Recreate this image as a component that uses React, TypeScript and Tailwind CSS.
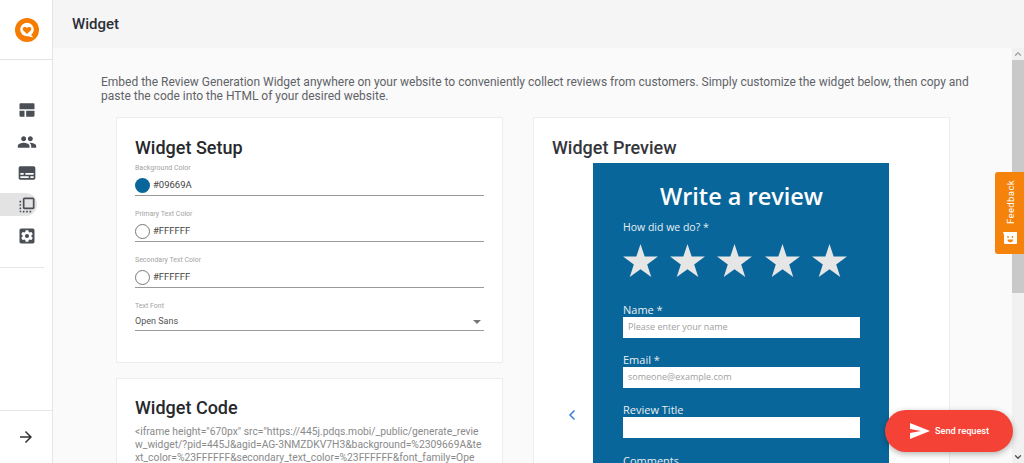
import { ChevronLeft, ChevronUp, ChevronDown } from 'lucide-react';

const roboto = "font-['Roboto',sans-serif]";

function NavIcon({ d, active }: { d: string; active?: boolean }) {
  return (
    <div className={`flex h-[23px] w-[37px] items-center justify-end rounded-r-full ${active ? 'bg-[#e3e3e3]' : ''}`}>
      <svg viewBox="0 0 24 24" className="h-[20px] w-[20px] fill-[#4a4f55]">
        <path d={d} />
      </svg>
    </div>
  );
}

const navIcons = [
  'M3 5v6h18V5c0-.6-.4-1-1-1H4c-.6 0-1 .4-1 1zm0 8v6c0 .6.4 1 1 1h5v-7H3zm8 0v7h9c.6 0 1-.4 1-1v-6H11z',
  'M16 11c1.66 0 2.99-1.34 2.99-3S17.66 5 16 5s-3 1.34-3 3 1.34 3 3 3zm-8 0c1.66 0 2.99-1.34 2.99-3S9.66 5 8 5 5 6.34 5 8s1.34 3 3 3zm0 2c-2.33 0-7 1.17-7 3.5V19h14v-2.5C15 14.17 10.33 13 8 13zm8 0c-.29 0-.62.02-.97.05 1.16.84 1.97 1.97 1.97 3.45V19h6v-2.5c0-2.33-4.67-3.5-7-3.5z',
  'M20 4H4c-1.1 0-2 .9-2 2v12c0 1.1.9 2 2 2h16c1.1 0 2-.9 2-2V6c0-1.1-.9-2-2-2zM4 12h4v2H4v-2zm10 6H4v-2h10v2zm6 0h-4v-2h4v2zm0-4H10v-2h10v2z',
  'M3 13h2v-2H3v2zm0 4h2v-2H3v2zm2 4v-2H3c0 1.1.89 2 2 2zM3 9h2V7H3v2zm12 12h2v-2h-2v2zm4-18H9c-1.11 0-2 .9-2 2v10c0 1.1.89 2 2 2h10c1.1 0 2-.9 2-2V5c0-1.1-.9-2-2-2zm0 12H9V5h10v10zm-8 6h2v-2h-2v2zm-4 0h2v-2H7v2z',
  'M19 3H5c-1.1 0-2 .9-2 2v14c0 1.1.9 2 2 2h14c1.1 0 2-.9 2-2V5c0-1.1-.9-2-2-2zm-1.750 9c0 .23-.02.46-.05.68l1.480 1.160c.13.11.17.3.08.45l-1.400 2.420c-.09.15-.27.21-.43.15l-1.740-.7c-.36.28-.76.51-1.180.69l-.26 1.850c-.03.17-.18.3-.35.3h-2.800c-.17 0-.32-.13-.35-.29l-.26-1.850c-.43-.18-.82-.41-1.180-.69l-1.740.7c-.16.06-.34 0-.43-.15l-1.400-2.420c-.09-.15-.05-.34.08-.45l1.480-1.160c-.03-.23-.05-.46-.05-.69 0-.23.02-.46.05-.68l-1.480-1.160c-.13-.11-.17-.3-.08-.45l1.400-2.420c.09-.15.27-.21.43-.15l1.740.7c.36-.28.76-.51 1.180-.69l.26-1.850c.03-.17.18-.3.35-.3h2.800c.17 0 .32.13.35.29l.26 1.850c.43.18.82.41 1.180.69l1.740-.7c.16-.06.34 0 .43.15l1.400 2.420c.09.15.05.34-.08.45l-1.480 1.160c.03.23.05.46.05.69zM12 9.500a2.500 2.500 0 1 0 0 5 2.500 2.500 0 0 0 0-5z',
];

function Sidebar() {
  return (
    <aside className="flex h-full w-[53px] shrink-0 flex-col border-r border-[#e6e6e6] bg-white">
      <div className="flex h-[60px] shrink-0 items-center justify-center border-b border-[#e3e3e3] pl-[2px]">
        <svg viewBox="0 0 24 24" className="h-[24px] w-[24px]">
          <circle cx="12" cy="12" r="12" fill="#f57c00" />
          <circle cx="12" cy="11.500" r="6.800" fill="#fff" />
          <path d="M14 15l4.500 4.500-6.500-1.500z" fill="#fff" />
          <path d="M12 16l-3.700-3.600c-1.300-1.400-.4-3.500 1.500-3.500.9 0 1.700.5 2.200 1.200.5-.7 1.300-1.200 2.200-1.200 1.900 0 2.800 2.100 1.500 3.500z" fill="#f57c00" />
        </svg>
      </div>
      <nav className="flex h-[207px] shrink-0 flex-col gap-[8.5px] pt-[38.5px]">
        {navIcons.map((d, i) => (
          <NavIcon key={i} d={d} active={i === 3} />
        ))}
      </nav>
      <div className="h-px w-[44px] shrink-0 bg-[#e6e6e6]" />
      <div className="flex-1" />
      <div className="flex h-[53px] shrink-0 items-center justify-center border-t border-[#e6e6e6]">
        <svg viewBox="0 0 24 24" className="h-[18px] w-[18px] fill-[#333]">
          <path d="M12 4l-1.410 1.410L16.170 11H4v2h12.170l-5.580 5.590L12 20l8-8z" />
        </svg>
      </div>
    </aside>
  );
}

function ColorField({ label, value, swatch }: { label: string; value: string; swatch?: boolean }) {
  return (
    <div className="h-[46px]">
      <div className="h-[14px] text-[7px] leading-[14px] text-[#a3a3a3]">{label}</div>
      <div className="flex h-[21px] items-center gap-[3px] border-b border-[#9a9a9a]">
        <span className={`h-[15px] w-[15px] rounded-full ${swatch ? 'bg-[#09669A]' : 'border border-[#777] bg-white'}`} />
        <span className="text-[9.5px] text-[#444]">{value}</span>
      </div>
    </div>
  );
}

function WidgetField({ label, placeholder }: { label: string; placeholder: string }) {
  return (
    <div className="mb-[14px]">
      <div className="h-[15px] text-[11px] leading-[15px] text-[#e8eef2]">{label}</div>
      <div className="flex h-[21px] items-center bg-white pl-[5px] text-[9px] text-[#a0a0a0]">{placeholder}</div>
    </div>
  );
}

function Star() {
  return (
    <svg viewBox="0 0 36 34" className="h-[33px] w-[35px] fill-[#e6e6e6]">
      <path d="M18 0l4.300 13H36l-11.100 8L29.100 34 18 26l-11.100 8 4.200-13L0 13h13.700z" />
    </svg>
  );
}

export default function App() {
  return (
    <div className={`relative flex h-screen w-full overflow-hidden bg-[#fafafa] ${roboto}`}>
      <Sidebar />
      <div className="flex min-w-0 flex-1 flex-col">
        <header className="flex h-[48px] shrink-0 items-center bg-[#f5f5f5] pl-[19px] text-[15px] font-medium text-[#2b2f36]">
          Widget
        </header>
        <div className="flex min-h-0 flex-1">
          <main className="min-w-0 flex-1 overflow-hidden pl-[48px] pt-[27px]">
            <p className="w-[880px] text-[12px] leading-[14px] text-[#5f6368]">
              Embed the Review Generation Widget anywhere on your website to conveniently collect reviews from customers. Simply customize the widget below, then copy and paste the code into the HTML of your desired website.
            </p>
            <div className="mt-[14px] flex items-start gap-[30px] pl-[15px]">
              <div className="flex w-[387px] shrink-0 flex-col gap-[15px]">
                <section className="h-[246px] border border-[#ededed] bg-white px-[18px] pt-[18px]">
                  <h2 className="mb-[1px] h-[24px] text-[18px] font-medium leading-[24px] text-[#26282c]">Widget Setup</h2>
                  <ColorField label="Background Color" value="#09669A" swatch />
                  <ColorField label="Primary Text Color" value="#FFFFFF" />
                  <ColorField label="Secondary Text Color" value="#FFFFFF" />
                  <div className="h-[14px] text-[7px] leading-[14px] text-[#a3a3a3]">Text Font</div>
                  <div className="flex h-[18px] items-center justify-between border-b border-[#9a9a9a] text-[9px] text-[#555]">
                    Open Sans
                    <span className="mr-[3px] h-0 w-0 border-x-4 border-t-4 border-x-transparent border-t-[#777]" />
                  </div>
                </section>
                <section className="h-[200px] border border-[#ededed] bg-white px-[18px] pt-[18px]">
                  <h2 className="h-[22px] text-[18px] font-medium leading-[22px] text-[#26282c]">Widget Code</h2>
                  <p className="mt-[6px] text-[10.3px] leading-[13px] whitespace-nowrap text-[#8a8a8a]">
                    &lt;iframe height="670px" src="https://445j.pdqs.mobi/_public/generate_revie<br />
                    w_widget/?pid=445J&amp;agid=AG-3NMZDKV7H3&amp;background=%2309669A&amp;te<br />
                    xt_color=%23FFFFFF&amp;secondary_text_color=%23FFFFFF&amp;font_family=Ope
                  </p>
                </section>
              </div>
              <section className="relative h-[480px] w-[417px] shrink-0 border border-[#ededed] bg-white pt-[18px]">
                <h2 className="h-[24px] pl-[18px] text-[18px] font-medium leading-[24px] text-[#33363a]">Widget Preview</h2>
                <div className="ml-[59px] mt-[3px] w-[296px] bg-[#09669A] pl-[30px] pr-[29px] pt-[16px] font-['Open_Sans',sans-serif]">
                  <div className="text-center text-[23.5px] font-semibold leading-[34px] text-white">Write a review</div>
                  <div className="mt-[6px] h-[17px] text-[10.5px] leading-[17px] text-[#e8eef2]">How did we do? *</div>
                  <div className="mt-[7.5px] mb-[25px] flex gap-[12.2px]">
                    <Star /><Star /><Star /><Star /><Star />
                  </div>
                  <WidgetField label="Name *" placeholder="Please enter your name" />
                  <WidgetField label="Email *" placeholder="someone@example.com" />
                  <WidgetField label="Review Title" placeholder="" />
                  <div className="h-[17px] text-[11px] leading-[17px] text-[#e8eef2]">Comments</div>
                </div>
                <ChevronLeft className="absolute left-[30px] top-[289px] h-[16px] w-[16px] text-[#3b82d6]" strokeWidth={2.5} />
              </section>
            </div>
          </main>
          <div className="flex w-[12px] shrink-0 flex-col bg-[#f1f1f1]">
            <div className="flex h-[12px] items-center justify-center">
              <ChevronUp className="h-[10px] w-[10px] text-[#a3a3a3]" strokeWidth={3} />
            </div>
            <div className="h-[233px] w-full bg-[#c9c9c9]" />
            <div className="flex-1" />
            <div className="flex h-[12px] items-center justify-center">
              <ChevronDown className="h-[10px] w-[10px] text-[#505050]" strokeWidth={3} />
            </div>
          </div>
        </div>
      </div>

      <div className="absolute right-0 top-[172px] flex h-[82px] w-[29px] flex-col items-center justify-between rounded-l-[3px] bg-[#f5820a] pb-[10px] pt-[8px]">
        <span className="ml-[3px] rotate-180 text-[9.5px] tracking-[0.4px] text-white [writing-mode:vertical-rl]">Feedback</span>
        <svg viewBox="0 0 14 12" className="h-[12px] w-[14px] fill-white">
          <path d="M1 0h13v11a1 1 0 0 1-1 1H2a1 1 0 0 1-1-1V3L0 0z" />
          <circle cx="5" cy="5" r="0.9" fill="#f5820a" />
          <circle cx="9.500" cy="5" r="0.9" fill="#f5820a" />
          <path d="M4.500 7.500h5.500a2.700 2.700 0 0 1-5.500 0z" fill="#f5820a" />
        </svg>
      </div>

      <button className="absolute left-[885px] top-[410px] flex h-[42px] w-[128px] items-center rounded-full bg-[#f44336] pl-[25px] text-[9.2px] font-medium text-white shadow-[0_2px_6px_rgba(0,0,0,0.3)]">
        <svg viewBox="0 0 20 16" className="mr-[5px] h-[16px] w-[20px] fill-white">
          <path d="M0 0l20 8-20 8 0-6 11-2-11-2z" />
        </svg>
        Send request
      </button>
    </div>
  );
}
